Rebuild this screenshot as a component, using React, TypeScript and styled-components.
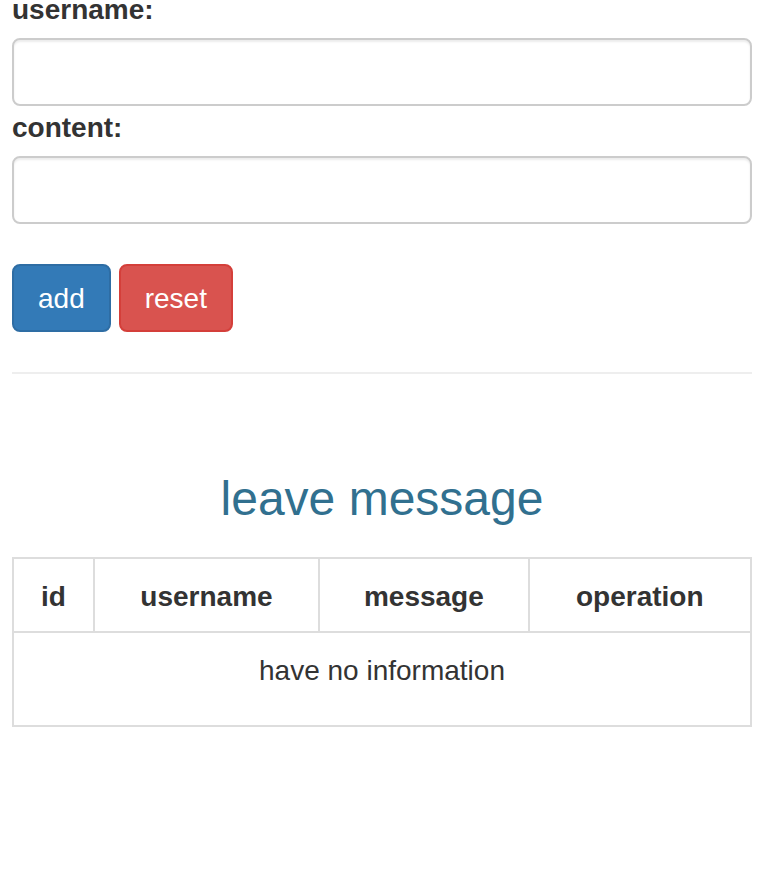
import React, { useState } from "react";
import styled, { createGlobalStyle } from "styled-components";

const GlobalStyle = createGlobalStyle`
    * {
        box-sizing: border-box;
    }
    body {
        margin: 0;
        background: #fff;
        color: #333;
        font-family: "Liberation Sans", Arial, sans-serif;
        font-size: 28px;
        line-height: 40px;
    }
`

const columns = [
    { label: 'id', width: 81 },
    { label: 'username', width: 226 },
    { label: 'message', width: 210 },
    { label: 'operation', width: 223 },
]

export default function App() {
    const [username, setUsername] = useState('')
    const [content, setContent] = useState('')
    const [list, setList] = useState<{ id: number, username: string, message: string }[]>([])

    function handleAdd() {
        if (!username || !content) return
        setList([...list, { id: list.length + 1, username, message: content }])
        setUsername('')
        setContent('')
    }

    function handleReset() {
        setUsername('')
        setContent('')
    }

    return (
        <>
            <GlobalStyle />
            <Page>
                <Form onSubmit={e => e.preventDefault()}>
                    <Label>username:</Label>
                    <Input type="text" value={username} onChange={e => setUsername(e.target.value)} />
                    <Label>content:</Label>
                    <Input type="text" value={content} onChange={e => setContent(e.target.value)} />
                    <Actions>
                        <Button $variant="primary" onClick={handleAdd}>add</Button>
                        <Button $variant="danger" onClick={handleReset}>reset</Button>
                    </Actions>
                </Form>
                <Divider />
                <Title>leave message</Title>
                <Table>
                    <thead>
                        <tr>
                            {columns.map(c => (
                                <Th key={c.label} $width={c.width}>{c.label}</Th>
                            ))}
                        </tr>
                    </thead>
                    <tbody>
                        {list.length === 0 ? (
                            <tr>
                                <EmptyCell colSpan={4}>have no information</EmptyCell>
                            </tr>
                        ) : list.map(item => (
                            <tr key={item.id}>
                                <Td>{item.id}</Td>
                                <Td>{item.username}</Td>
                                <Td>{item.message}</Td>
                                <Td>
                                    <Button $variant="danger" onClick={() => setList(list.filter(i => i.id !== item.id))}>delete</Button>
                                </Td>
                            </tr>
                        ))}
                    </tbody>
                </Table>
            </Page>
        </>
    )
}

const Page = styled.div`
    width: 740px;
    margin-left: 12px;
`
const Form = styled.form`
    display: flex;
    flex-direction: column;
    margin-top: -12px;
`
const Label = styled.label`
    display: block;
    font-weight: bold;
    font-size: 28px;
    line-height: 40px;
    padding-top: 2px;
    margin-bottom: 8px;
`
const Input = styled.input`
    display: block;
    width: 100%;
    height: 68px;
    padding: 12px 24px;
    font-family: inherit;
    font-size: 28px;
    color: #555;
    background: #fff;
    border: 2px solid #ccc;
    border-radius: 8px;
    box-shadow: inset 0 2px 2px rgba(0, 0, 0, .075);
    outline: none;
`
const Actions = styled.div`
    display: flex;
    gap: 8px;
    margin-top: 40px;
`
const Button = styled.button<{ $variant: 'primary' | 'danger' }>`
    height: 68px;
    padding: 13px 24px 11px;
    font-family: inherit;
    font-size: 28px;
    line-height: 40px;
    color: #fff;
    border-radius: 8px;
    cursor: pointer;
    background-color: ${p => p.$variant === 'primary' ? '#337ab7' : '#d9534f'};
    border: 2px solid ${p => p.$variant === 'primary' ? '#2e6da4' : '#d43f3a'};
`
const Divider = styled.hr`
    margin: 40px 0 0;
    border: 0;
    border-top: 2px solid #eee;
`
const Title = styled.h3`
    margin: 98px 0 32px;
    text-align: center;
    font-size: 48px;
    font-weight: 500;
    line-height: 53px;
    color: #31708f;
`
const Table = styled.table`
    width: 740px;
    border-collapse: collapse;
    border: 2px solid #ddd;
`
const Th = styled.th<{ $width: number }>`
    width: ${p => p.$width}px;
    padding: 18px 16px 14px;
    border: 2px solid #ddd;
    font-weight: bold;
    text-align: center;
    line-height: 40px;
`
const Td = styled.td`
    padding: 18px 16px 14px;
    border: 2px solid #ddd;
    text-align: center;
`
const EmptyCell = styled.td`
    padding: 18px 16px 34px;
    border: 2px solid #ddd;
    text-align: center;
`
